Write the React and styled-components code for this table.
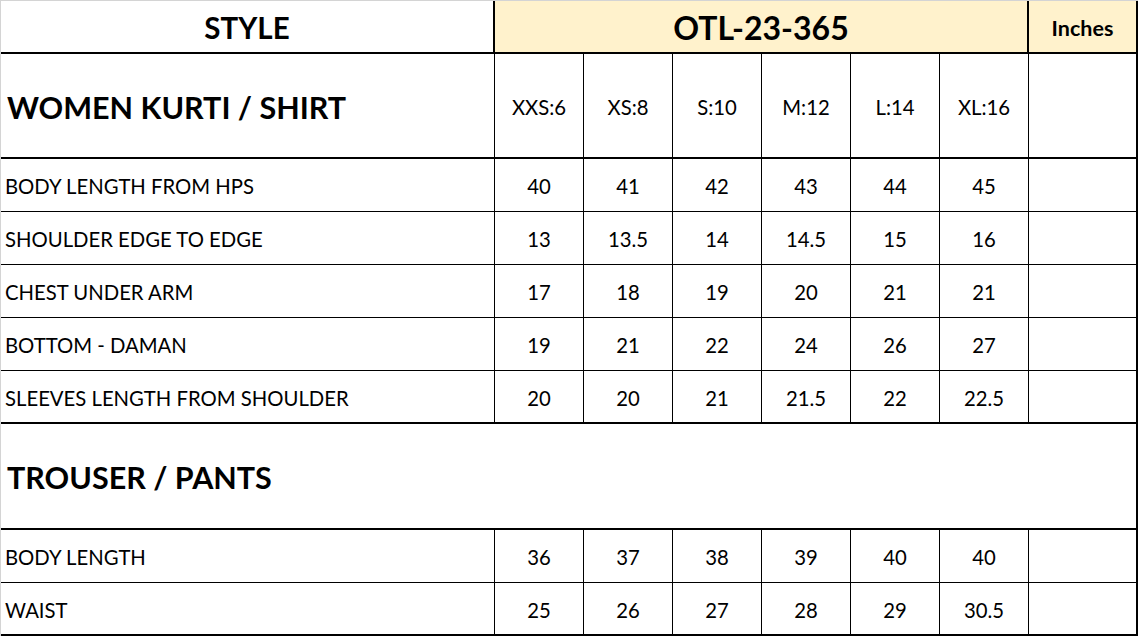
import React from "react";
import styled, { createGlobalStyle, css } from "styled-components";

const Global = createGlobalStyle`
  html, body { margin: 0; padding: 0; background: #fff; }
  body { font-family: Lato, "Liberation Sans", sans-serif; color: #000; }
`;

const Sheet = styled.div`
  width: 1138px;
  height: 636px;
  box-sizing: border-box;
  border-top: 1px solid #d4d4d4;
  border-left: 1px solid #d4d4d4;
  display: grid;
  grid-template-columns: 494px repeat(6, 89px) 109px;
  grid-template-rows: 53px 105px repeat(5, 53px) 106px 53px 53px;
  overflow: hidden;
`;

const Cell = styled.div`
  box-sizing: border-box;
  display: flex;
  align-items: center;
  justify-content: ${(p) => (p.$left ? "flex-start" : "center")};
  padding-left: ${(p) => (p.$left ? "4px" : "0")};
  padding-top: 2px;
  border-right: ${(p) => (p.$rw ?? 1)}px solid #000;
  border-bottom: ${(p) => (p.$bw ?? 1)}px solid #000;
  background: ${(p) => (p.$fill ? "#fff2cc" : "#fff")};
  font-size: 20.3px;
  white-space: nowrap;
  grid-column: ${(p) => p.$span || "auto"};
  ${(p) =>
    p.$title &&
    css`
      font-weight: 700;
      font-size: 30.5px;
      padding-left: 6px;
    `}
`;

const Heading = styled.span`
  font-weight: 700;
  font-size: ${(p) => p.$size}px;
`;

const sizes = ["XXS:6", "XS:8", "S:10", "M:12", "L:14", "XL:16"];

const kurti = [
  ["BODY LENGTH FROM HPS", ["40", "41", "42", "43", "44", "45"]],
  ["SHOULDER EDGE TO EDGE", ["13", "13.5", "14", "14.5", "15", "16"]],
  ["CHEST UNDER ARM", ["17", "18", "19", "20", "21", "21"]],
  ["BOTTOM - DAMAN", ["19", "21", "22", "24", "26", "27"]],
  ["SLEEVES LENGTH FROM SHOULDER", ["20", "20", "21", "21.5", "22", "22.5"]],
];

const pants = [
  ["BODY LENGTH", ["36", "37", "38", "39", "40", "40"]],
  ["WAIST", ["25", "26", "27", "28", "29", "30.5"]],
];

function DataRow({ label, values, last }) {
  const bw = last ? 2 : 1;
  return (
    <>
      <Cell $left $bw={bw}>{label}</Cell>
      {values.map((v, i) => (
        <Cell key={i} $bw={bw}>{v}</Cell>
      ))}
      <Cell $bw={bw} $rw={2} />
    </>
  );
}

export default function App() {
  return (
    <>
      <Global />
      <Sheet>
        <Cell $bw={2} $rw={2}>
          <Heading $size={29.5}>STYLE</Heading>
        </Cell>
        <Cell $span="span 6" $fill $bw={2} $rw={2}>
          <Heading $size={32}>OTL-23-365</Heading>
        </Cell>
        <Cell $fill $bw={2} $rw={2}>
          <Heading $size={21.5}>Inches</Heading>
        </Cell>

        <Cell $left $title $bw={2}>WOMEN KURTI / SHIRT</Cell>
        {sizes.map((s) => (
          <Cell key={s} $bw={2}>{s}</Cell>
        ))}
        <Cell $bw={2} $rw={2} />

        {kurti.map(([l, v], i) => (
          <DataRow key={l} label={l} values={v} last={i === kurti.length - 1} />
        ))}

        <Cell $left $title $span="span 8" $bw={2} $rw={2}>TROUSER / PANTS</Cell>

        {pants.map(([l, v], i) => (
          <DataRow key={l} label={l} values={v} last={i === pants.length - 1} />
        ))}
      </Sheet>
    </>
  );
}
